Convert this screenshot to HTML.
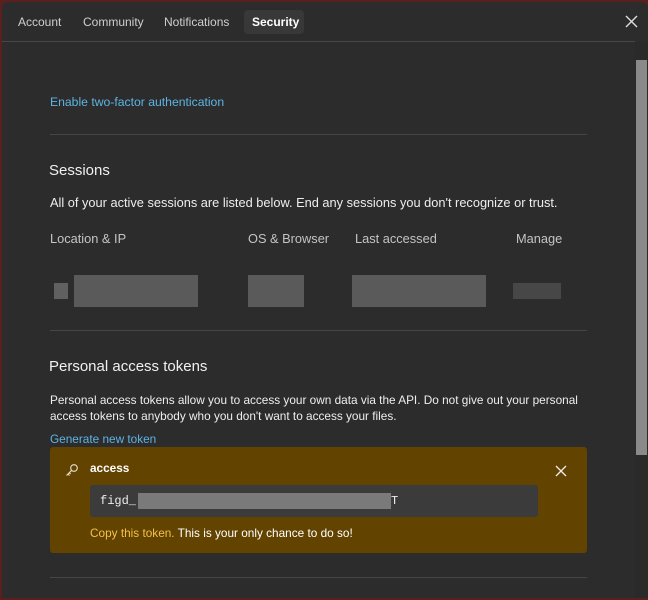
<!DOCTYPE html>
<html><head><style>
*{margin:0;padding:0;box-sizing:border-box}
body{width:648px;height:600px;background:#5a1f1f;font-family:"Liberation Sans",sans-serif;overflow:hidden;position:relative}
.p{position:absolute;left:2px;top:2px;width:646px;height:596px;background:#2c2c2c;border-radius:6px 6px 0 0}
.a{position:absolute;white-space:nowrap}
.tab{position:absolute;top:15px;font-size:12px;color:#cfcfcf}
.hr{position:absolute;left:50px;width:537px;height:1px;background:#454545}
.blk{position:absolute;background:#5a5a5a}
</style></head><body>
<div class="p"></div>
<div class="tab" style="left:18px">Account</div>
<div class="tab" style="left:83px">Community</div>
<div class="tab" style="left:164px">Notifications</div>
<div class="a" style="left:244px;top:10px;width:60px;height:24px;background:#383838;border-radius:4px"></div>
<div class="tab" style="left:252px;color:#fff;font-weight:bold">Security</div>
<svg class="a" style="left:625px;top:15px" width="13" height="13"><path d="M1 1L12 12M12 1L1 12" stroke="#ddd" stroke-width="1.4"/></svg>
<div class="a" style="left:2px;top:41px;width:633px;height:1px;background:#464646"></div>
<div class="a" style="left:635px;top:42px;width:13px;height:556px;background:#2a2a2a"></div>
<div class="a" style="left:636px;top:60px;width:11px;height:395px;background:#8a8a8a"></div>
<div class="a" style="left:50px;top:95px;font-size:12.2px;color:#5db4e3">Enable two-factor authentication</div>
<div class="hr" style="top:134px"></div>
<div class="a" style="left:49px;top:162px;font-size:15px;color:#f0f0f0">Sessions</div>
<div class="a" style="left:50px;top:195px;font-size:12.8px;color:#eee">All of your active sessions are listed below. End any sessions you don't recognize or trust.</div>
<div class="a" style="left:50px;top:231px;font-size:12.8px;color:#c4c4c4">Location &amp; IP</div>
<div class="a" style="left:248px;top:231px;font-size:12.8px;color:#c4c4c4">OS &amp; Browser</div>
<div class="a" style="left:355px;top:231px;font-size:12.8px;color:#c4c4c4">Last accessed</div>
<div class="a" style="left:516px;top:231px;font-size:12.8px;color:#c4c4c4">Manage</div>
<div class="blk" style="left:54px;top:283px;width:14px;height:16px;background:#606060"></div>
<div class="blk" style="left:74px;top:275px;width:124px;height:32px"></div>
<div class="blk" style="left:248px;top:275px;width:56px;height:32px"></div>
<div class="blk" style="left:352px;top:275px;width:134px;height:32px"></div>
<div class="blk" style="left:513px;top:283px;width:48px;height:16px;background:#474747"></div>
<div class="hr" style="top:330px"></div>
<div class="a" style="left:49px;top:358px;font-size:15px;color:#f0f0f0">Personal access tokens</div>
<div class="a" style="left:50px;top:392px;font-size:11.8px;color:#eee;line-height:16px">Personal access tokens allow you to access your own data via the API. Do not give out your personal<br>access tokens to anybody who you don't want to access your files.</div>
<div class="a" style="left:50px;top:432px;font-size:11.8px;color:#5db4e3">Generate new token</div>
<div class="a" style="left:50px;top:447px;width:537px;height:106px;background:#634300;border-radius:3px"></div>
<svg class="a" style="left:65px;top:463px" width="14" height="14" viewBox="0 0 14 14"><circle cx="9" cy="5" r="3.3" fill="none" stroke="#e8e0d0" stroke-width="1.1"/><path d="M6.7 7.3L1.5 12.5M3 11l1.5 1.5M4.3 9.7l1.3 1.3" stroke="#e8e0d0" stroke-width="1.1" fill="none"/></svg>
<div class="a" style="left:90px;top:461px;font-size:11.8px;font-weight:bold;color:#fff">access</div>
<svg class="a" style="left:555px;top:465px" width="12" height="12"><path d="M1 1L11 11M11 1L1 11" stroke="#eee" stroke-width="1.3"/></svg>
<div class="a" style="left:90px;top:485px;width:448px;height:32px;background:#3b3b3b;border-radius:3px"></div>
<div class="a" style="left:100px;top:494px;font-size:12px;font-family:'Liberation Mono',monospace;color:#eee">figd_</div>
<div class="a" style="left:138px;top:493px;width:253px;height:16px;background:#7a7a7a"></div>
<div class="a" style="left:391px;top:494px;font-size:12px;font-family:'Liberation Mono',monospace;color:#eee">T</div>
<div class="a" style="left:90px;top:526px;font-size:11.8px;color:#fff"><span style="color:#f3c14a">Copy this token.</span> This is your only chance to do so!</div>
<div class="hr" style="top:577px"></div>
</body></html>
